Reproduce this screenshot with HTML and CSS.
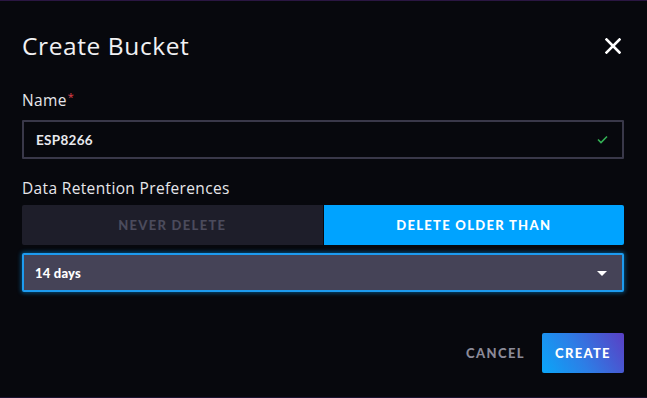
FILE: index.html
```html
<!DOCTYPE html>
<html>
<head>
<meta charset="utf-8">
<link rel="stylesheet" href="styles.css">
</head>
<body>
<div class="overlay">
  <div class="header">
    <h1 class="title">Create Bucket</h1>
    <button class="close" aria-label="Close">
      <svg width="16" height="16" viewBox="0 0 16 16"><path d="M1.5 1.5L14.5 14.5M14.5 1.5L1.5 14.5" stroke="#fff" stroke-width="2.6" stroke-linecap="square"/></svg>
    </button>
  </div>
  <div class="body">
    <div class="field">
      <label class="label">Name<span class="req">*</span></label>
      <div class="input">
        <span class="input-text">ESP8266</span>
        <svg class="check" width="11" height="9" viewBox="0 0 11 9"><path d="M1 4.5L4 7.5L10 1.5" stroke="#34b155" stroke-width="1.6" fill="none"/></svg>
      </div>
    </div>
    <div class="field">
      <label class="label">Data Retention Preferences</label>
      <div class="toggle">
        <div class="toggle-btn off">NEVER DELETE</div>
        <div class="toggle-btn on">DELETE OLDER THAN</div>
      </div>
      <div class="select">
        <span class="select-text">14 days</span>
        <span class="caret"></span>
      </div>
    </div>
  </div>
  <div class="footer">
    <button class="cancel">CANCEL</button>
    <button class="create">CREATE</button>
  </div>
</div>
</body>
</html>
```
FILE: styles.css
```css
html, body {
  margin: 0;
  padding: 0;
  background: #07080d;
  width: 647px;
  height: 398px;
  overflow: hidden;
}
body {
  font-family: "Lato", "Open Sans", sans-serif;
  color: #ffffff;
}
.overlay {
  box-sizing: border-box;
  width: 647px;
  height: 398px;
  border-top: 1px solid #2a1642;
  border-bottom: 1px solid #1a1430;
  padding: 0 23px 0 22px;
  display: flex;
  flex-direction: column;
}
.header {
  display: flex;
  align-items: center;
  justify-content: space-between;
  height: 88px;
}
.title {
  margin: 0;
  font-family: "Open Sans", sans-serif;
  font-size: 24.5px;
  font-weight: 400;
  color: #f1f1f3;
  letter-spacing: 0.6px;
  line-height: 30px;
  margin-top: 1px;
}
.close {
  background: none;
  border: 0;
  padding: 0;
  margin-right: 3px;
  margin-top: 2px;
  display: flex;
}
.field {
  display: flex;
  flex-direction: column;
}
.label {
  font-family: "Open Sans", sans-serif;
  font-size: 15.5px;
  letter-spacing: 0.35px;
  color: #e6e6ea;
  line-height: 20px;
  margin-top: 1px;
}
.req {
  color: #e0404a;
  font-size: 11px;
  vertical-align: top;
  line-height: 14px;
  margin-left: 1px;
}
.input {
  margin-top: 10px;
  height: 39px;
  box-sizing: border-box;
  border: 2px solid #393849;
  border-radius: 1px;
  display: flex;
  align-items: center;
  justify-content: space-between;
  padding: 0 14px 0 12px;
}
.input-text {
  font-size: 13.5px;
  font-weight: 700;
  color: #e9e9ee;
  letter-spacing: 0.3px;
}
.field + .field { margin-top: 18px; }
.toggle {
  margin-top: 7px;
  display: flex;
  height: 40px;
}
.toggle-btn {
  flex: 1;
  display: flex;
  align-items: center;
  justify-content: center;
  font-size: 13px;
  font-weight: 900;
  letter-spacing: 1.3px;
}
.toggle-btn.off {
  background: #1e1e2a;
  color: #4b4b5c;
  border-radius: 2px 0 0 2px;
}
.toggle-btn.on {
  background: #00a3ff;
  color: #ffffff;
  border-radius: 0 2px 2px 0;
  margin-left: 1px;
}
.select {
  margin-top: 8px;
  height: 39px;
  box-sizing: border-box;
  background: #454357;
  border: 2px solid #1d9bef;
  border-radius: 2px;
  box-shadow: 0 0 4px 1px rgba(0, 163, 255, 0.45);
  display: flex;
  align-items: center;
  justify-content: space-between;
  padding: 0 15px 0 11px;
}
.select-text {
  font-size: 13px;
  font-weight: 900;
  color: #ffffff;
  letter-spacing: 0.2px;
}
.caret {
  width: 0;
  height: 0;
  border-left: 5px solid transparent;
  border-right: 5px solid transparent;
  border-top: 5px solid #ffffff;
  margin-top: 1px;
}
.footer {
  display: flex;
  justify-content: flex-end;
  align-items: center;
  margin-top: 41px;
  gap: 17px;
}
.cancel {
  background: none;
  border: 0;
  color: #8b8a98;
  font-family: inherit;
  font-size: 13px;
  font-weight: 900;
  letter-spacing: 1.4px;
  padding: 0;
}
.create {
  width: 82px;
  height: 40px;
  border: 0;
  border-radius: 2px;
  background: linear-gradient(60deg, #0aa6f8 0%, #2d7ee6 45%, #5a3fc4 100%);
  color: #ffffff;
  font-family: inherit;
  font-size: 13px;
  font-weight: 900;
  letter-spacing: 1.3px;
  padding: 0;
}
```
